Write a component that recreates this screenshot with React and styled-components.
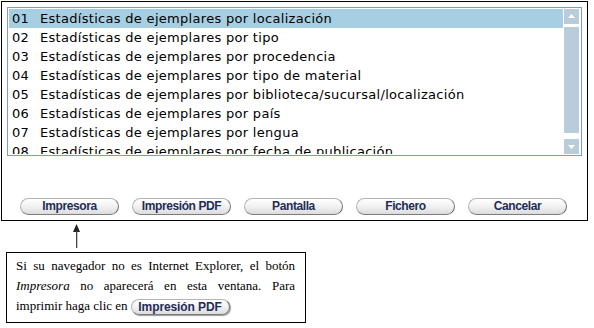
import React from "react";
import styled, { createGlobalStyle } from "styled-components";

const Global = createGlobalStyle`
  html, body { margin: 0; padding: 0; background: #fff; }
  body { font-family: "DejaVu Sans", Verdana, sans-serif; }
`;

const Page = styled.div`
  padding: 1px 0 0 1px;
  width: 594px;
  height: 328px;
  box-sizing: border-box;
  display: flex;
  flex-direction: column;
`;

const Frame = styled.div`
  box-sizing: border-box;
  width: 587px;
  height: 220px;
  border: 1px solid #000;
  padding: 5px;
  display: flex;
  flex-direction: column;
`;

const ListBox = styled.div`
  box-sizing: border-box;
  width: 575px;
  height: 151px;
  border: 1px solid #7f9db9;
  padding: 1px;
  display: flex;
  gap: 1px;
  overflow: hidden;
`;

const Rows = styled.div`
  flex: 1;
  overflow: hidden;
`;

const Row = styled.div`
  height: 19px;
  display: grid;
  grid-template-columns: 28px 1fr;
  padding-left: 3px;
  align-items: center;
  font-size: 13px;
  letter-spacing: 0.3px;
  color: #000;
  white-space: nowrap;
  background: ${(p) => (p.$selected ? "#a6cfe3" : "transparent")};
`;

const Scrollbar = styled.div`
  width: 15px;
  display: flex;
  flex-direction: column;
  gap: 3px;
  margin-right: 1px;
`;

const ScrollBtn = styled.div`
  height: 15px;
  background: #b8ccd9;
  display: flex;
  align-items: center;
  justify-content: center;
`;

const Thumb = styled.div`
  height: 108px;
  background: #b8ccd9;
`;

const ButtonRow = styled.div`
  display: flex;
  gap: 13px;
  padding-left: 13px;
  margin-top: 42px;
`;

const PillButton = styled.button`
  box-sizing: border-box;
  width: 99px;
  height: 17px;
  padding: 0;
  border-radius: 9px;
  border: 1px solid;
  border-color: #b4b4b4 #6f6f6f #7c7c7c #b4b4b4;
  background: linear-gradient(#ffffff 0%, #f3f3f3 45%, #dcdcdc 100%);
  font-family: "Liberation Sans", Arial, sans-serif;
  font-weight: bold;
  font-size: 12px;
  letter-spacing: -0.4px;
  color: #1f2d57;
  line-height: 15px;
  cursor: pointer;
`;

const InlineButton = styled(PillButton)`
  height: 16px;
  width: 99px;
  vertical-align: middle;
  margin-left: 3px;
  letter-spacing: -0.1px;
  box-shadow: 1px 1px 1px #9a9a9a;
`;

const Annotation = styled.div`
  display: flex;
  flex-direction: column;
`;

const ArrowWrap = styled.div`
  height: 31px;
  padding-left: 71px;
  padding-top: 3px;
  box-sizing: border-box;
`;

const Note = styled.div`
  box-sizing: border-box;
  margin-left: 5px;
  width: 300px;
  height: 71px;
  border: 1px solid #000;
  padding: 3px 10px 0 9px;
  font-family: "Liberation Serif", "Times New Roman", serif;
  font-size: 13px;
  line-height: 20px;
  text-align: justify;
  color: #000;
`;

const items = [
  "Estadísticas de ejemplares por localización",
  "Estadísticas de ejemplares por tipo",
  "Estadísticas de ejemplares por procedencia",
  "Estadísticas de ejemplares por tipo de material",
  "Estadísticas de ejemplares por biblioteca/sucursal/localización",
  "Estadísticas de ejemplares por país",
  "Estadísticas de ejemplares por lengua",
  "Estadísticas de ejemplares por fecha de publicación",
];

const buttons = ["Impresora", "Impresión PDF", "Pantalla", "Fichero", "Cancelar"];

export default function App() {
  return (
    <>
      <Global />
      <Page>
        <Frame>
          <ListBox>
            <Rows>
              {items.map((t, i) => (
                <Row key={i} $selected={i === 0}>
                  <span>{String(i + 1).padStart(2, "0")}</span>
                  <span>{t}</span>
                </Row>
              ))}
            </Rows>
            <Scrollbar>
              <ScrollBtn>
                <svg width="7" height="4" viewBox="0 0 7 4">
                  <path d="M0 4 L3.5 0 L7 4 Z" fill="#fff" />
                </svg>
              </ScrollBtn>
              <Thumb />
              <div style={{ flex: 1 }} />
              <ScrollBtn>
                <svg width="7" height="4" viewBox="0 0 7 4">
                  <path d="M0 0 L3.5 4 L7 0 Z" fill="#fff" />
                </svg>
              </ScrollBtn>
            </Scrollbar>
          </ListBox>
          <ButtonRow>
            {buttons.map((b) => (
              <PillButton key={b}>{b}</PillButton>
            ))}
          </ButtonRow>
        </Frame>
        <Annotation>
          <ArrowWrap>
            <svg width="9" height="24" viewBox="0 0 9 24">
              <path d="M4.5 0 L8 8 L1 8 Z" fill="#222" />
              <rect x="4" y="7" width="1.3" height="17" fill="#444" />
            </svg>
          </ArrowWrap>
          <Note>
            Si su navegador no es Internet Explorer, el botón <i>Impresora</i> no aparecerá en esta ventana. Para
            imprimir haga clic en<InlineButton as="span" style={{ display: "inline-block", textAlign: "center" }}>Impresión PDF</InlineButton>
          </Note>
        </Annotation>
      </Page>
    </>
  );
}
